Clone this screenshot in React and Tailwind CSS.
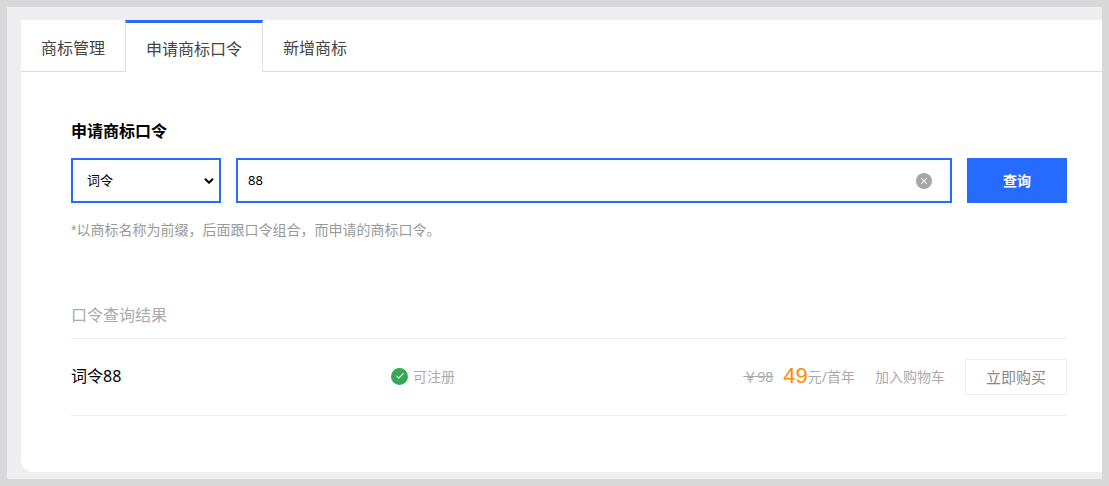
import React from 'react';
import { ChevronDown, X, Check } from 'lucide-react';

const App = () => {
  return (
    <div className="h-[486px] w-[1109px] overflow-hidden border-[7px] border-[#d8d8d8] bg-[#eeeef0] pl-[14px] pt-[13px] pb-[7px] font-['Noto_Sans','Noto_Sans_CJK_SC',sans-serif]">
      <div className="h-[452px] rounded-bl-[12px] bg-white">
        {/* Tabs */}
        <div className="flex h-[52px] border-b border-[#dddddd] text-[16px] leading-[24px] text-[#444444]">
          <div className="flex h-[51px] w-[104px] items-center justify-center pt-[5px]">商标管理</div>
          <div className="-mb-px flex h-[52px] w-[138px] items-center justify-center border-x border-[#dddddd] border-t-[3px] border-t-[#256bff] bg-white pt-[2px]">申请商标口令</div>
          <div className="flex h-[51px] items-center pl-[20px] pt-[5px]">新增商标</div>
        </div>

        <div className="pl-[50px] pr-[35px]">
          {/* Search */}
          <h2 className="mt-[47px] text-[16px] font-bold leading-[24px] text-black">申请商标口令</h2>
          <div className="mt-[15px] flex h-[45px] gap-[15px]">
            <div className="flex w-[150px] items-center justify-between border-2 border-[#256bff] pl-[14px] pr-[3px] text-[13px] text-black">
              <span>词令</span>
              <ChevronDown className="h-[14px] w-[14px]" strokeWidth={3.5} />
            </div>
            <div className="flex w-[716px] items-center justify-between border-2 border-[#256bff] pl-[10px] pr-[18px] text-[13px] text-black">
              <span>88</span>
              <span className="flex h-[16px] w-[16px] items-center justify-center rounded-full bg-[#a8a5a5]">
                <X className="h-[10px] w-[10px] text-white" strokeWidth={2.5} />
              </span>
            </div>
            <button className="w-[100px] bg-[#256bff] text-[14px] font-bold text-white">查询</button>
          </div>
          <p className="mt-[17px] font-['Liberation_Sans','Noto_Sans_CJK_SC',sans-serif] text-[14px] leading-[20px] text-[#999999]">*以商标名称为前缀，后面跟口令组合，而申请的商标口令。</p>

          {/* Results */}
          <h3 className="mt-[63px] h-[36px] border-b border-[#eeeeee] text-[16px] leading-[24px] text-[#aaaaaa]">口令查询结果</h3>
          <div className="flex h-[77px] items-center border-b border-[#eeeeee]">
            <div className="w-[320px] pb-[2px] text-[16px] text-black">词令88</div>
            <div className="flex items-center gap-[5px] pb-[2px] text-[14px] text-[#aaaaaa]">
              <span className="flex h-[17px] w-[17px] items-center justify-center rounded-full bg-[#34a853]">
                <Check className="h-[10px] w-[10px] text-white" strokeWidth={2.5} />
              </span>
              可注册
            </div>
            <div className="ml-auto flex items-center text-[14px] text-[#aaaaaa]">
              <span className="pb-[2px] line-through">￥98</span>
              <span className="ml-[10px] pb-[2px] font-['Liberation_Sans',sans-serif] text-[22px] leading-[24px] text-[#ff8c00]">49</span>
              <span className="pb-[2px]">元/首年</span>
              <span className="ml-[20px] pb-[2px]">加入购物车</span>
              <button className="ml-[20px] h-[36px] w-[102px] border border-[#eeeeee] text-[15px] text-[#888888]">立即购买</button>
            </div>
          </div>
        </div>
      </div>
    </div>
  );
};

export default App;
